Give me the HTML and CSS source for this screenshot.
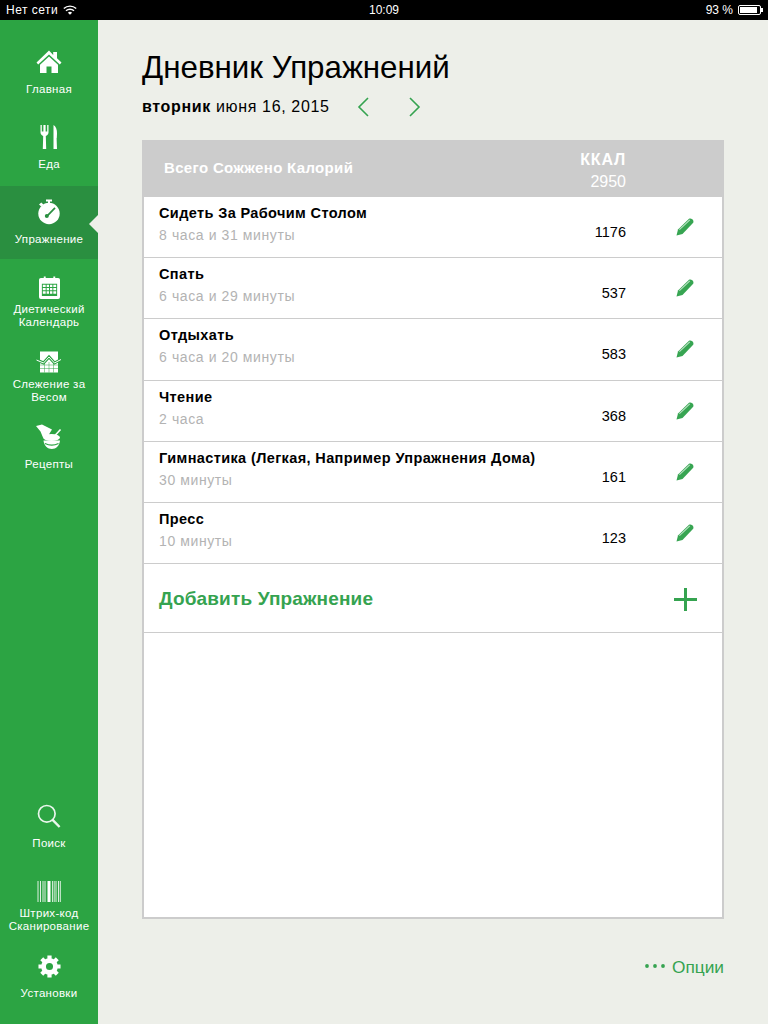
FILE: index.html
```html
<!DOCTYPE html>
<html lang="ru">
<head>
    <meta charset="UTF-8">
    <meta name="viewport" content="width=device-width, initial-scale=1.0">
    <title>Дневник Упражнений</title>
    <link rel="stylesheet" href="styles.css">
</head>
<body>
    <header class="status-bar">
        <div class="status-left">
            <span>Нет сети</span>
            <svg class="wifi" viewBox="0 0 14 10" width="14" height="10">
                <path d="M0.8 3.6a9 9 0 0 1 12.4 0" fill="none" stroke="#fff" stroke-width="1.4"/>
                <path d="M3 5.8a5.8 5.8 0 0 1 8 0" fill="none" stroke="#fff" stroke-width="1.4"/>
                <path d="M7 9.8L4.9 7.7a3 3 0 0 1 4.2 0z" fill="#fff"/>
            </svg>
        </div>
        <div class="status-time">10:09</div>
        <div class="status-right">
            <span>93 %</span>
            <div class="battery"><div class="battery-level"></div></div>
        </div>
    </header>

    <div class="app">
        <nav class="sidebar">
            <div class="nav-group">
                <a class="nav-item">
                    <span class="nav-icon">
                        <svg viewBox="0 0 26 24" width="26" height="24">
                            <path d="M13 0.5L0.5 12.4 2.2 14.4 13 4.4 23.8 14.4 25.5 12.4 21 8.2V2H17.2V5z" fill="#fff"/>
                            <path d="M13 6.4L4 14.8V23H10.5V16.5H15.5V23H22V14.8z" fill="#fff"/>
                        </svg>
                    </span>
                    <span class="nav-label">Главная</span>
                </a>
                <a class="nav-item">
                    <span class="nav-icon">
                        <svg viewBox="0 0 18 26" width="18" height="26">
                            <path d="M0.5 1V8.5C0.5 10.5 2 11.6 3.2 12L2.8 25H6.2L5.8 12C7 11.6 8.5 10.5 8.5 8.5V1H7.2V7.5H5.6V1H3.4V7.5H1.8V1z" fill="#fff"/>
                            <path d="M13.5 1C15.8 2.2 17.2 5.5 17 9.5L16.8 14H16.6L17 25H13.5z" fill="#fff"/>
                        </svg>
                    </span>
                    <span class="nav-label">Еда</span>
                </a>
                <a class="nav-item active">
                    <span class="nav-icon">
                        <svg viewBox="0 0 24 26" width="24" height="26">
                            <rect x="9" y="0.5" width="6" height="2" fill="#fff"/>
                            <rect x="11" y="2" width="2" height="3" fill="#fff"/>
                            <path d="M2 5.5L4.3 3.4 6.4 5.5 4.2 7.6z" fill="#fff"/>
                            <circle cx="12" cy="14.5" r="10.7" fill="#fff"/>
                            <path d="M9.8 17.4L18 8.8" stroke="#2a8f40" stroke-width="1.7" fill="none"/>
                            <circle cx="9.8" cy="17" r="2" fill="#2a8f40"/>
                        </svg>
                    </span>
                    <span class="nav-label">Упражнение</span>
                </a>
                <a class="nav-item two-line">
                    <span class="nav-icon">
                        <svg viewBox="0 0 22 24" width="21" height="23">
                            <path fill-rule="evenodd" fill="#fff" d="M2 2H5V0.5H7V2H15V0.5H17V2H20A2 2 0 0 1 22 4V22A2 2 0 0 1 20 24H2A2 2 0 0 1 0 22V4A2 2 0 0 1 2 2ZM3 8V21H19V8Z"/>
                            <path fill="#fff" d="M4 9H7V11.5H4ZM8 9H10.5V11.5H8ZM11.5 9H14V11.5H11.5ZM15 9H18V11.5H15ZM4 12.5H7V15H4ZM8 12.5H10.5V15H8ZM11.5 12.5H14V15H11.5ZM15 12.5H18V15H15ZM4 16H7V18.5H4ZM8 16H10.5V18.5H8ZM11.5 16H14V18.5H11.5ZM15 16H18V18.5H15Z"/>
                        </svg>
                    </span>
                    <span class="nav-label">Диетический Календарь</span>
                </a>
                <a class="nav-item two-line">
                    <span class="nav-icon">
                        <svg viewBox="0 0 26 22" width="26" height="22">
                            <rect x="4" y="0.5" width="18" height="21" fill="#fff"/>
                            <path d="M4 14H22M4 17.5H22M8.5 11V21.5M13 11V21.5M17.5 11V21.5" stroke="#2ca443" stroke-width="0.7" opacity="0.7" fill="none"/>
                            <path d="M0.5 9L7.5 12 13 6 18.5 12 25 8.5" stroke="#2ca443" stroke-width="3" fill="none"/>
                            <path d="M0.5 9L7.5 12 13 6 18.5 12 25 8.5" stroke="#fff" stroke-width="1" fill="none"/>
                        </svg>
                    </span>
                    <span class="nav-label">Слежение за Весом</span>
                </a>
                <a class="nav-item">
                    <span class="nav-icon">
                        <svg viewBox="0 0 28 26" width="28" height="26">
                            <path d="M1 2L7 0.5 17 5.5 14.5 9.5 13.5 12 8 13.5 5.5 7.5z" fill="#fff"/>
                            <path d="M20 11.5L25.5 5.5" stroke="#fff" stroke-width="1.6"/>
                            <ellipse cx="16.5" cy="13.5" rx="8.5" ry="3.5" fill="#fff"/>
                            <path d="M8.5 16.5H25C24.5 21.5 21 25 16.8 25S9 21.5 8.5 16.5Z" fill="#fff"/>
                            <path d="M10 19.5C14 21.5 19.5 21.5 23.5 19.5" stroke="#2ca443" stroke-width="1.2" fill="none"/>
                        </svg>
                    </span>
                    <span class="nav-label">Рецепты</span>
                </a>
            </div>
            <div class="nav-group">
                <a class="nav-item">
                    <span class="nav-icon">
                        <svg viewBox="0 0 24 24" width="24" height="24">
                            <circle cx="9.8" cy="9.8" r="8.3" fill="none" stroke="#fff" stroke-width="1.7" opacity="0.9"/>
                            <path d="M15.6 15.8L22.6 23" stroke="#fff" stroke-width="2.4" opacity="0.9"/>
                        </svg>
                    </span>
                    <span class="nav-label">Поиск</span>
                </a>
                <a class="nav-item two-line">
                    <span class="nav-icon">
                        <svg viewBox="0 0 24 21" width="24" height="21">
                            <path d="M1 0V21M3.5 0V21M6 0V21M8 0V21M19 0V21M21.5 0V21M23.3 0V21" stroke="#fff" stroke-width="1" opacity="0.85" fill="none"/>
                            <rect x="10.5" y="0" width="3" height="21" fill="#fff"/>
                            <path d="M15.5 0V21M17.2 0V21" stroke="#fff" stroke-width="0.9" opacity="0.85" fill="none"/>
                        </svg>
                    </span>
                    <span class="nav-label">Штрих-код Сканирование</span>
                </a>
                <a class="nav-item">
                    <span class="nav-icon">
                        <svg viewBox="0 0 24 24" width="23" height="23">
                            <circle cx="12" cy="12" r="6.2" fill="none" stroke="#fff" stroke-width="5"/>
                            <path d="M12 0.5V23.5M0.5 12H23.5M3.9 3.9L20.1 20.1M20.1 3.9L3.9 20.1" stroke="#fff" stroke-width="4.4" stroke-dasharray="5 13.5" fill="none"/>
                        </svg>
                    </span>
                    <span class="nav-label">Установки</span>
                </a>
            </div>
        </nav>

        <main class="content">
            <h1 class="page-title">Дневник Упражнений</h1>
            <div class="date-line">
                <span class="date-text"><b>вторник</b> июня 16, 2015</span>
                <svg class="chevron" viewBox="0 0 12 20" width="12" height="20"><path d="M11 1L2 10 11 19" fill="none" stroke="#35a350" stroke-width="1.6"/></svg>
                <svg class="chevron" viewBox="0 0 12 20" width="12" height="20"><path d="M1 1L10 10 1 19" fill="none" stroke="#35a350" stroke-width="1.6"/></svg>
            </div>

            <section class="card">
                <div class="card-head">
                    <div class="head-title">Всего Сожжено Калорий</div>
                    <div class="head-kcal">
                        <div class="head-unit">ККАЛ</div>
                        <div class="head-total">2950</div>
                    </div>
                </div>

                <div class="row">
                    <div class="row-text">
                        <div class="row-name">Сидеть За Рабочим Столом</div>
                        <div class="row-time">8 часа и 31 минуты</div>
                    </div>
                    <div class="row-kcal">1176</div>
                    <svg class="pencil" viewBox="0 0 18 18" width="18" height="18"><path d="M0.5 17.5L2 11.5 13 0.8C14 0.2 15.2 0.4 16.3 1.3 17.4 2.4 17.8 3.6 17.2 4.8L6.5 16z" fill="#37a552"/><path d="M3.4 11.6L13.8 1.8" stroke="#b9e2c3" stroke-width="1.1"/></svg>
                </div>
                <div class="row">
                    <div class="row-text">
                        <div class="row-name">Спать</div>
                        <div class="row-time">6 часа и 29 минуты</div>
                    </div>
                    <div class="row-kcal">537</div>
                    <svg class="pencil" viewBox="0 0 18 18" width="18" height="18"><path d="M0.5 17.5L2 11.5 13 0.8C14 0.2 15.2 0.4 16.3 1.3 17.4 2.4 17.8 3.6 17.2 4.8L6.5 16z" fill="#37a552"/><path d="M3.4 11.6L13.8 1.8" stroke="#b9e2c3" stroke-width="1.1"/></svg>
                </div>
                <div class="row">
                    <div class="row-text">
                        <div class="row-name">Отдыхать</div>
                        <div class="row-time">6 часа и 20 минуты</div>
                    </div>
                    <div class="row-kcal">583</div>
                    <svg class="pencil" viewBox="0 0 18 18" width="18" height="18"><path d="M0.5 17.5L2 11.5 13 0.8C14 0.2 15.2 0.4 16.3 1.3 17.4 2.4 17.8 3.6 17.2 4.8L6.5 16z" fill="#37a552"/><path d="M3.4 11.6L13.8 1.8" stroke="#b9e2c3" stroke-width="1.1"/></svg>
                </div>
                <div class="row">
                    <div class="row-text">
                        <div class="row-name">Чтение</div>
                        <div class="row-time">2 часа</div>
                    </div>
                    <div class="row-kcal">368</div>
                    <svg class="pencil" viewBox="0 0 18 18" width="18" height="18"><path d="M0.5 17.5L2 11.5 13 0.8C14 0.2 15.2 0.4 16.3 1.3 17.4 2.4 17.8 3.6 17.2 4.8L6.5 16z" fill="#37a552"/><path d="M3.4 11.6L13.8 1.8" stroke="#b9e2c3" stroke-width="1.1"/></svg>
                </div>
                <div class="row">
                    <div class="row-text">
                        <div class="row-name">Гимнастика (Легкая, Например Упражнения Дома)</div>
                        <div class="row-time">30 минуты</div>
                    </div>
                    <div class="row-kcal">161</div>
                    <svg class="pencil" viewBox="0 0 18 18" width="18" height="18"><path d="M0.5 17.5L2 11.5 13 0.8C14 0.2 15.2 0.4 16.3 1.3 17.4 2.4 17.8 3.6 17.2 4.8L6.5 16z" fill="#37a552"/><path d="M3.4 11.6L13.8 1.8" stroke="#b9e2c3" stroke-width="1.1"/></svg>
                </div>
                <div class="row">
                    <div class="row-text">
                        <div class="row-name">Пресс</div>
                        <div class="row-time">10 минуты</div>
                    </div>
                    <div class="row-kcal">123</div>
                    <svg class="pencil" viewBox="0 0 18 18" width="18" height="18"><path d="M0.5 17.5L2 11.5 13 0.8C14 0.2 15.2 0.4 16.3 1.3 17.4 2.4 17.8 3.6 17.2 4.8L6.5 16z" fill="#37a552"/><path d="M3.4 11.6L13.8 1.8" stroke="#b9e2c3" stroke-width="1.1"/></svg>
                </div>

                <div class="add-row">
                    <span class="add-label">Добавить Упражнение</span>
                    <svg class="plus" viewBox="0 0 23 23" width="23" height="23"><path d="M11.5 0V23M0 11.5H23" stroke="#35a350" stroke-width="3" fill="none"/></svg>
                </div>
            </section>

            <div class="options">
                <svg viewBox="0 0 20 4" width="20" height="4"><circle cx="2" cy="2" r="1.9" fill="#35a350"/><circle cx="10" cy="2" r="1.9" fill="#35a350"/><circle cx="18" cy="2" r="1.9" fill="#35a350"/></svg>
                <span>Опции</span>
            </div>
        </main>
    </div>
</body>
</html>
```

FILE: styles.css
```css
* {
    box-sizing: border-box;
}

body {
    font-family: "Liberation Sans", Arial, sans-serif;
    background-color: #edefe9;
    color: black;
    margin: 0;
    padding: 0;
    height: 1024px;
    display: flex;
    flex-direction: column;
    overflow: hidden;
}

.status-bar {
    height: 20px;
    flex: none;
    background-color: black;
    color: white;
    font-size: 12px;
    display: grid;
    grid-template-columns: 1fr auto 1fr;
    align-items: center;
    padding: 0 6px;
}

.status-left {
    display: flex;
    align-items: center;
    gap: 5px;
    letter-spacing: 0.5px;
}

.status-time {
    text-align: center;
}

.status-right {
    display: flex;
    justify-content: flex-end;
    align-items: center;
    gap: 5px;
}

.battery {
    position: relative;
    width: 23px;
    height: 10px;
    border: 1px solid white;
    border-radius: 2px;
    padding: 1px;
    margin-right: 1px;
}

.battery::after {
    content: "";
    position: absolute;
    right: -3px;
    top: 2px;
    width: 2px;
    height: 4px;
    background-color: white;
}

.battery-level {
    width: 92%;
    height: 100%;
    background-color: white;
}

.app {
    flex: 1;
    display: flex;
    min-height: 0;
}

.sidebar {
    width: 98px;
    flex: none;
    background-color: #2ca443;
    display: flex;
    flex-direction: column;
    justify-content: space-between;
    padding: 16px 0 9px;
}

.nav-item {
    position: relative;
    height: 75px;
    display: flex;
    flex-direction: column;
    align-items: center;
    padding-top: 13px;
    color: white;
}

.nav-item.active {
    height: 73px;
    margin-bottom: 2px;
    background-color: #2a8f40;
}

.nav-item.active::after {
    content: "";
    position: absolute;
    right: 0;
    top: 29px;
    border-style: solid;
    border-width: 9px 9px 9px 0;
    border-color: transparent #edefe9 transparent transparent;
}

.nav-icon {
    height: 26px;
    display: flex;
    align-items: center;
    justify-content: center;
}

.nav-label {
    height: 26px;
    margin-top: 1px;
    display: flex;
    align-items: center;
    text-align: center;
    font-size: 11.5px;
    letter-spacing: 0.3px;
    line-height: 13px;
}

.two-line .nav-label {
    margin-top: 3px;
}

.content {
    flex: 1;
    display: flex;
    flex-direction: column;
    padding: 30px 44px 0;
    min-width: 0;
}

.page-title {
    margin: 0;
    font-size: 31.3px;
    font-weight: normal;
    line-height: 36px;
}

.date-line {
    display: flex;
    align-items: center;
    height: 24px;
    margin-top: 9px;
    font-size: 16px;
    letter-spacing: 0.65px;
}

.date-text {
    width: 215px;
}

.chevron {
    margin-right: 40px;
}

.card {
    margin-top: 21px;
    height: 779px;
    flex: none;
    background-color: white;
    border: 2px solid #ccc;
    border-top: none;
}

.card-head {
    height: 57.1px;
    margin: 0 -2px;
    background-color: #ccc;
    color: white;
    display: flex;
    justify-content: space-between;
    padding: 11px 98px 0 22px;
}

.head-title {
    font-size: 15px;
    letter-spacing: 0.33px;
    font-weight: bold;
    line-height: 34px;
}

.head-kcal {
    text-align: right;
}

.head-unit {
    font-weight: bold;
    font-size: 16px;
    letter-spacing: 0.8px;
    line-height: 17px;
}

.head-total {
    font-size: 16px;
    line-height: 22px;
    margin-top: 3px;
}

.row {
    height: 61.17px;
    display: flex;
    border-bottom: 1px solid #ccc;
    padding-left: 15px;
}

.row-text {
    flex: 1;
    min-width: 0;
    padding-top: 7px;
}

.row-name {
    font-size: 14.5px;
    letter-spacing: 0.38px;
    font-weight: bold;
    line-height: 18px;
}

.row-time {
    font-size: 14px;
    letter-spacing: 0.6px;
    color: #b3b3b3;
    line-height: 18px;
    margin-top: 4px;
}

.row-kcal {
    font-size: 14.5px;
    padding-top: 26px;
    line-height: 18px;
    margin-right: 50px;
}

.pencil {
    margin: 21px 28px 0 0;
}

.add-row {
    height: 69px;
    display: flex;
    align-items: center;
    justify-content: space-between;
    border-bottom: 1px solid #ccc;
    padding: 2px 25px 0 15px;
}

.add-label {
    color: #35a350;
    font-size: 19px;
    letter-spacing: 0.15px;
    font-weight: bold;
}

.options {
    display: flex;
    justify-content: flex-end;
    align-items: center;
    gap: 7px;
    margin-top: 38px;
    color: #35a350;
    font-size: 17.3px;
    line-height: 20px;
}

.options svg {
    margin-bottom: 2px;
}
```
